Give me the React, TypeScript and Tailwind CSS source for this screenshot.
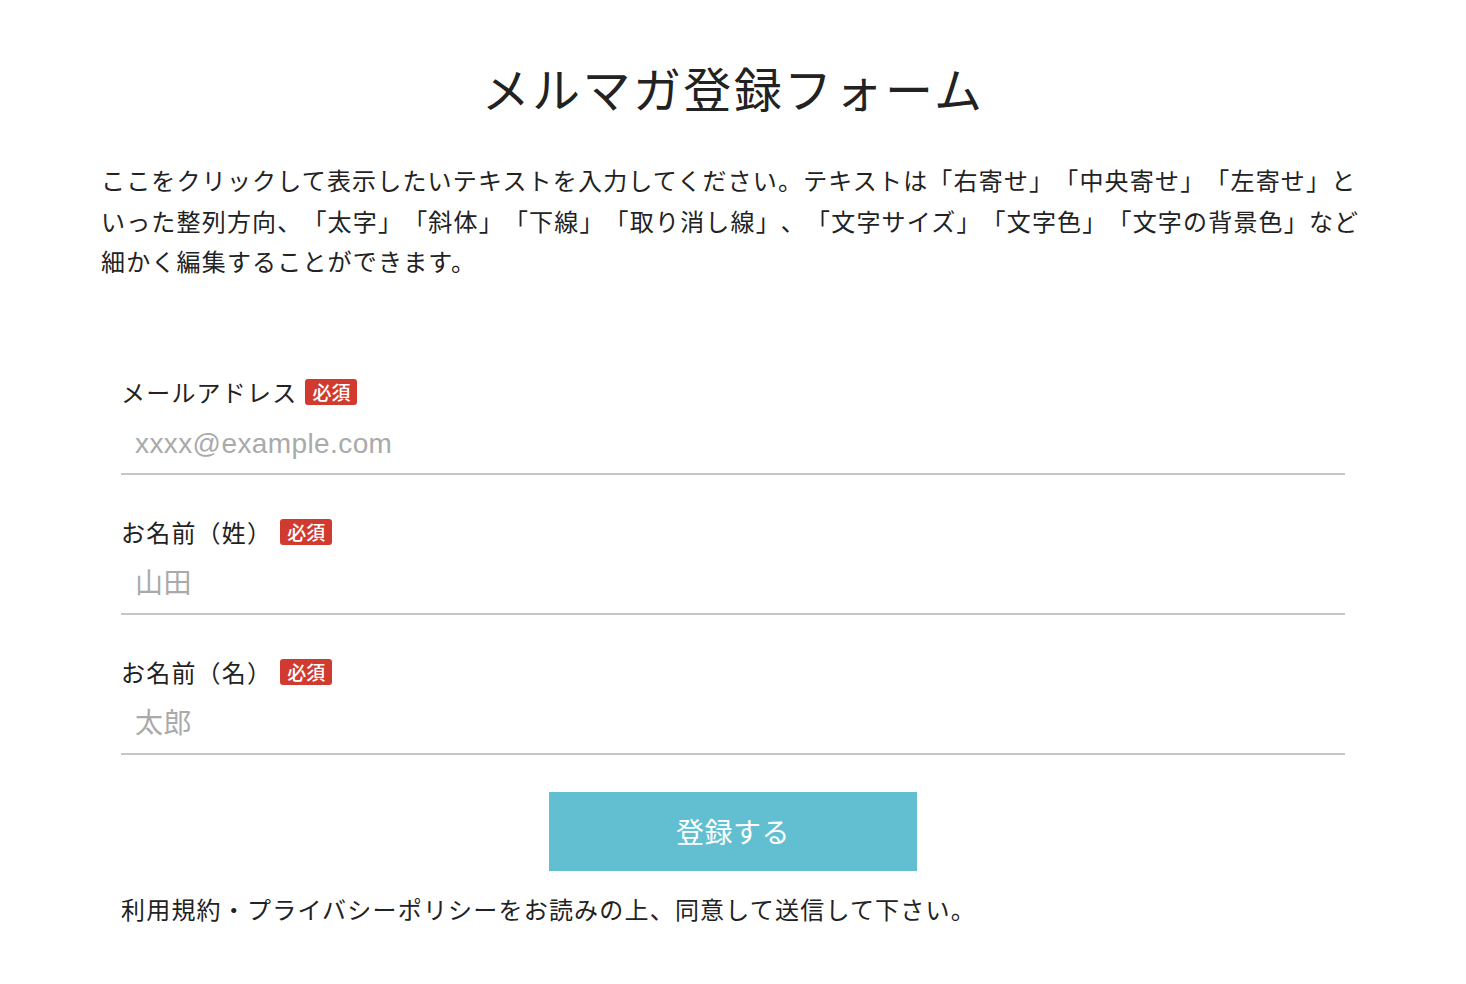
const fields = [
  { id: "email", label: "メールアドレス", placeholder: "xxxx@example.com", type: "email" },
  { id: "last", label: "お名前（姓）", placeholder: "山田", type: "text" },
  { id: "first", label: "お名前（名）", placeholder: "太郎", type: "text" },
];

const App = () => {
  return (
    <div className="min-h-screen bg-white text-[#222] font-['Noto_Sans_CJK_JP',sans-serif] [text-spacing-trim:space-all]">
      <div className="mx-auto w-[1260px] pt-[51px]">
        <h1 className="text-center text-[48px] leading-[72px] tracking-[0.05em] font-normal">
          メルマガ登録フォーム
        </h1>
        <p className="mt-[37px] mr-[-4px] ml-[-2px] text-[24px] leading-[40.5px] tracking-[1.18px]">
          ここをクリックして表示したいテキストを入力してください。テキストは「右寄せ」「中央寄せ」「左寄せ」といった整列方向、「太字」「斜体」「下線」「取り消し線」、「文字サイズ」「文字色」「文字の背景色」など細かく編集することができます。
        </p>

        <form className="mt-[92px] px-[18px]">
          {fields.map((field, i) => (
            <div key={field.id} className={i > 0 ? "mt-[39px]" : ""}>
              <label
                htmlFor={field.id}
                className="flex h-[36px] items-center text-[24px] tracking-[0.05em]"
              >
                <span>{field.label}</span>
                <span className="ml-[8px] flex h-[26px] w-[52px] items-center justify-center rounded-[3px] bg-[#d13a2e] text-[19px] font-medium leading-none tracking-normal text-white">
                  必須
                </span>
              </label>
              <input
                id={field.id}
                type={field.type}
                placeholder={field.placeholder}
                className="mt-[6px] block h-[59px] w-full border-b-2 border-[#c6c6c6] bg-transparent px-[14px] text-[28px] tracking-[0.4px] font-['Liberation_Sans','Noto_Sans_CJK_JP',sans-serif] outline-none placeholder:text-[#aaa]"
              />
            </div>
          ))}

          <div className="mt-[37px] flex justify-center">
            <button
              type="button"
              className="h-[79px] w-[368px] bg-[#62bfd1] text-[28px] tracking-[0.02em] text-white"
            >
              登録する
            </button>
          </div>

          <p className="mt-[20px] text-[24px] leading-[36px] tracking-[0.05em]">
            利用規約・プライバシーポリシーをお読みの上、同意して送信して下さい。
          </p>
        </form>
      </div>
    </div>
  );
};

export default App;
